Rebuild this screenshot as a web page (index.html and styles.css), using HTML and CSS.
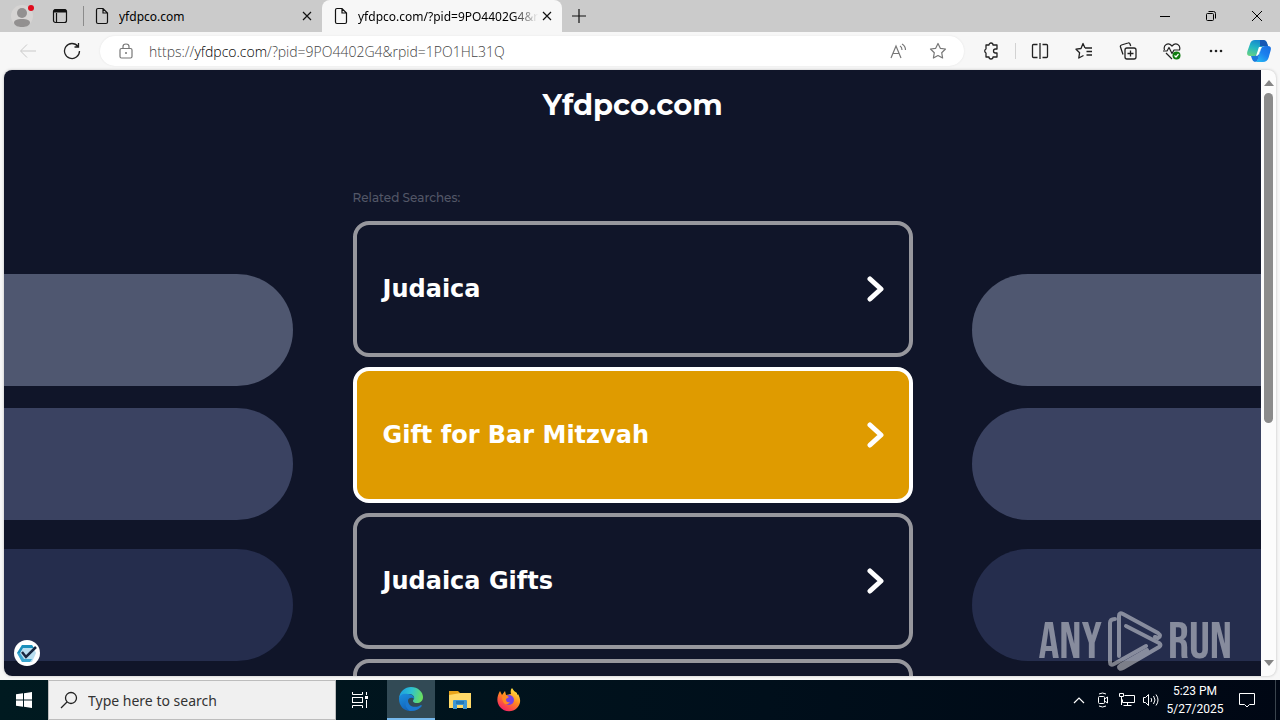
FILE: index.html
```html
<!DOCTYPE html>
<html lang="en">
<head>
    <meta charset="UTF-8">
    <meta name="viewport" content="width=device-width, initial-scale=1.0">
    <title>yfdpco.com</title>
    <link rel="stylesheet" href="styles.css">
</head>
<body>
    <!-- tab strip -->
    <div class="tab-bar">
        <button class="profile">
            <svg width="24" height="24" viewBox="0 0 24 24">
                <circle cx="12" cy="12" r="11" fill="#d6d4d3"/>
                <circle cx="12" cy="9" r="5" fill="#929090"/>
                <path d="M4 19c0-3 3-4 8-4s8 1 8 4c-1 3-4 4-8 4s-7-1-8-4z" fill="#929090"/>
                <circle cx="21" cy="4" r="3" fill="#e00b1c"/>
            </svg>
        </button>
        <button class="tab-actions">
            <svg width="16" height="16" viewBox="0 0 16 16" fill="none" stroke="#111" stroke-width="1.2">
                <rect x="1.5" y="1.5" width="13" height="13" rx="2"/>
                <path d="M2 3h12" stroke-width="3"/><path d="M4.500 5v9"/>
            </svg>
        </button>
        <span class="divider"></span>
        <div class="tab">
            <svg width="14" height="18" viewBox="0 0 14 18" fill="none" stroke="#111" stroke-width="1.2">
                <path d="M3 1.500h5l4.500 4.500v9q0 1.500-1.500 1.500H3q-1.500 0-1.500-1.500V3Q1.500 1.500 3 1.500zM8 1.500V6h4.500"/>
            </svg>
            <span class="tab-title">yfdpco.com</span>
            <button class="tab-close">
                <svg width="10" height="10" viewBox="0 0 10 10" stroke="#111" stroke-width="1.2"><path d="M1 1l8 8M9 1l-8 8"/></svg>
            </button>
        </div>
        <div class="tab active">
            <svg width="14" height="18" viewBox="0 0 14 18" fill="none" stroke="#111" stroke-width="1.2">
                <path d="M3 1.500h5l4.500 4.500v9q0 1.500-1.500 1.500H3q-1.500 0-1.500-1.500V3Q1.500 1.500 3 1.500zM8 1.500V6h4.500"/>
            </svg>
            <span class="tab-title">yfdpco.com/?pid=9PO4402G4&amp;r</span>
            <button class="tab-close">
                <svg width="10" height="10" viewBox="0 0 10 10" stroke="#111" stroke-width="1.2"><path d="M1 1l8 8M9 1l-8 8"/></svg>
            </button>
        </div>
        <button class="new-tab">
            <svg width="14" height="14" viewBox="0 0 14 14" stroke="#111" stroke-width="1.2"><path d="M7 0v14M0 7h14"/></svg>
        </button>
        <div class="window-buttons">
            <button><svg width="12" height="12" viewBox="0 0 12 12" stroke="#000"><path d="M1 6.500h10"/></svg></button>
            <button>
                <svg width="12" height="12" viewBox="0 0 12 12" fill="none" stroke="#000">
                    <rect x="1.500" y="3.500" width="7" height="7" rx="1"/><path d="M3.500 1.500h5q2 0 2 2v5"/>
                </svg>
            </button>
            <button><svg width="12" height="12" viewBox="0 0 12 12" stroke="#000"><path d="M1 1l10 10M11 1L1 11"/></svg></button>
        </div>
    </div>

    <!-- address bar and toolbar icons -->
    <div class="toolbar">
        <button class="tool back">
            <svg width="18" height="16" viewBox="0 0 18 16" fill="none" stroke="#c9c9c9"><path d="M17 8H2M8 1.500L1.500 8 8 14.500"/></svg>
        </button>
        <button class="tool">
            <svg width="18" height="18" viewBox="0 0 18 18" fill="none" stroke="#222" stroke-width="1.300">
                <path d="M15 4.500A7.500 7.500 0 1 0 16.500 9M15.500 1v4h-4"/>
            </svg>
        </button>
        <div class="address">
            <svg width="14" height="16" viewBox="0 0 14 16" fill="none" stroke="#777" stroke-width="1.200">
                <rect x="1" y="5.500" width="12" height="9.500" rx="1.500"/><path d="M4 5V3.500a3 2.500 0 0 1 6 0V5"/>
                <circle cx="7" cy="10" r="1" fill="#777" stroke="none"/>
            </svg>
            <a class="url" href="#">https://<span>yfdpco.com</span>/?pid=9PO4402G4&amp;rpid=1PO1HL31Q</a>
            <button class="read">
                <svg width="18" height="18" viewBox="0 0 18 18" fill="none" stroke="#777" stroke-width="1.200">
                    <path d="M2 16L7 4l5 12M4 11.500h6M11 4q2 1 2 4M13 2q3.500 2 3.500 6"/>
                </svg>
            </button>
            <button class="favorite">
                <svg width="18" height="18" viewBox="0 0 18 18" fill="none" stroke="#777" stroke-width="1.200" stroke-linejoin="round">
                    <path d="M9 1.500l2.300 4.800 5.200.7-3.800 3.700.9 5.300L9 13.500 4.400 16l.9-5.300L1.500 7l5.200-.7z"/>
                </svg>
            </button>
        </div>
        <button class="tool ext">
            <svg width="18" height="18" viewBox="0 0 18 18" fill="none" stroke="#222" stroke-width="1.300" stroke-linejoin="round">
                <path d="M4 3h3a2 2 0 0 1 4 0h4v4h-1.500a2 2 0 0 0 0 4H15v4h-4a2 2 0 0 1-4 0H4v-4a2.200 2.200 0 0 1 0-4z"/>
            </svg>
        </button>
        <span class="divider"></span>
        <button class="tool">
            <svg width="18" height="18" viewBox="0 0 18 18" fill="none" stroke="#222" stroke-width="1.300">
                <path d="M6.500 2.500h-4q-1 0-1 1v11q0 1 1 1h4M11.500 2.500h4q1 0 1 1v11q0 1-1 1h-4M9 1v16"/>
            </svg>
        </button>
        <button class="tool">
            <svg width="18" height="18" viewBox="0 0 18 18" fill="none" stroke="#222" stroke-width="1.300" stroke-linejoin="round">
                <path d="M10 6H17M11.500 9.500H17M11.500 13H17M10 6L8 1.500 6 6.500l-5 .7 3.600 3.500L3.800 16 8.500 13.500"/>
            </svg>
        </button>
        <button class="tool">
            <svg width="18" height="18" viewBox="0 0 18 18" fill="none" stroke="#222" stroke-width="1.300">
                <rect x="6" y="6" width="11" height="11" rx="2"/><path d="M11.500 8.500v6M8.500 11.500h6M4 12.500L1.500 5Q1 3.500 2.500 3L9 1q1.500-.5 2 1l.7 2"/>
            </svg>
        </button>
        <button class="tool">
            <svg width="18" height="18" viewBox="0 0 18 18" fill="none" stroke="#222" stroke-width="1.200" stroke-linejoin="round">
                <path d="M1.500 8C0 3 5-.500 9 4c4-4.500 9-1 7.500 4M3 11l6 6M0 9h4l2-3.500 3 6L11 8h6"/>
                <circle cx="13.500" cy="13.500" r="4" fill="#107c10" stroke="none"/><path d="M11.500 13.500l1.500 1.500 2.500-3" stroke="#fff"/>
            </svg>
        </button>
        <button class="tool">
            <svg width="14" height="4" viewBox="0 0 14 4" fill="#222"><circle cx="2" cy="2" r="1.300"/><circle cx="7" cy="2" r="1.300"/><circle cx="12" cy="2" r="1.300"/></svg>
        </button>
        <button class="tool copilot">
            <svg width="24" height="24" viewBox="0 0 24 24">
                <defs>
                    <linearGradient id="cop1" x1="0.600" y1="0" x2="0.200" y2="1">
                        <stop offset="0" stop-color="#1583cf"/><stop offset="0.500" stop-color="#23b6c3"/><stop offset="1" stop-color="#64d184"/>
                    </linearGradient>
                    <linearGradient id="cop2" x1="1" y1="0" x2="0.200" y2="1">
                        <stop offset="0" stop-color="#176de0"/><stop offset="0.500" stop-color="#1b7fee"/><stop offset="1" stop-color="#25b9f3"/>
                    </linearGradient>
                </defs>
                <path d="M8 1h8q3 0 4 3l1 3h-3q-3 0-4 3l-3 7H3q-4 0-2.500-5L3 5q1-4 5-4z" fill="url(#cop1)"/>
                <path d="M13 1h3q3 0 4 3l1 3h-8z" fill="#1457b4"/>
                <path d="M8 23h8q4 0 5.500-4l2-7q1.500-5-2.500-5h-3q-3 0-4 3l-3 9q-1 4-3 4z" fill="url(#cop2)"/>
                <path d="M4 17h4q2 0 3-3l2-1-2 7q-1 3-3 3-2 0-3-3z" fill="#1a79dc"/>
                <path d="M12 8h3q-1 1-2 4l-1 3q-1 2-3 2l2-6q.500-2 1-3z" fill="#fff"/>
            </svg>
        </button>
    </div>

    <!-- web page -->
    <div class="view">
        <div class="page">
            <div class="pills left">
                <div class="pill light"></div>
                <div class="pill mid"></div>
                <div class="pill dark"></div>
            </div>
            <div class="content">
                <h1>Yfdpco.com</h1>
                <p>Related Searches:</p>
                <a class="card" href="#">
                    <span>Judaica</span>
                    <svg width="18" height="28" viewBox="0 0 18 28" fill="none" stroke="#fff" stroke-width="5" stroke-linecap="round" stroke-linejoin="round"><path d="M3 4l11 10L3 24"/></svg>
                </a>
                <a class="card hover" href="#">
                    <span>Gift for Bar Mitzvah</span>
                    <svg width="18" height="28" viewBox="0 0 18 28" fill="none" stroke="#fff" stroke-width="5" stroke-linecap="round" stroke-linejoin="round"><path d="M3 4l11 10L3 24"/></svg>
                </a>
                <a class="card" href="#">
                    <span>Judaica Gifts</span>
                    <svg width="18" height="28" viewBox="0 0 18 28" fill="none" stroke="#fff" stroke-width="5" stroke-linecap="round" stroke-linejoin="round"><path d="M3 4l11 10L3 24"/></svg>
                </a>
                <div class="card"></div>
            </div>
            <div class="pills right">
                <div class="pill light"></div>
                <div class="pill mid"></div>
                <div class="pill dark"></div>
            </div>
            <button class="consent">
                <svg width="26" height="26" viewBox="0 0 26 26">
                    <circle cx="13" cy="13" r="13" fill="#fff"/>
                    <path d="M8 5h10l4 8-4 9H8l-5-9z" fill="#b9def0"/>
                    <path d="M8 5h10l2 3H9l-3 5-3 0z" fill="#1b8fbb"/>
                    <path d="M3 13h3l4 6h8l-2 3H8z" fill="#3aa6d0"/>
                    <path d="M8 12l4 5 10-10" fill="none" stroke="#18263f" stroke-width="2.500"/>
                </svg>
            </button>
        </div>
        <div class="scrollbar">
            <svg width="10" height="6" viewBox="0 0 10 6" fill="#858585"><path d="M5 0l5 6H0z"/></svg>
            <div class="track"><div class="thumb"></div></div>
            <svg width="10" height="6" viewBox="0 0 10 6" fill="#858585"><path d="M0 0h10L5 6z"/></svg>
        </div>
        <div class="watermark">
            <span>ANY</span>
            <svg width="56" height="62" viewBox="0 0 56 62" fill="none" stroke="#fff" stroke-width="4" stroke-linecap="round" stroke-linejoin="round">
                <path d="M12 46V6q0-4 4-2l35 19q4 3 0 5l-3-1M8 9q-5 0-5 4v39q0 4 4 2l32-18"/>
                <path d="M19 16l33 17q3 2 0 4L16 58q-4 2-4-1l2-2 26-15"/>
            </svg>
            <span>RUN</span>
        </div>
    </div>

    <!-- taskbar -->
    <div class="taskbar">
        <button class="task">
            <svg width="16" height="16" viewBox="0 0 16 16" fill="#fff"><path d="M0 2.300L7 1.300V7.500H0zM8 1.200L16 0v7.500H8zM0 8.500h7v6.200l-7-1zM8 8.500h8V16l-8-1.200z"/></svg>
        </button>
        <label class="search">
            <svg width="18" height="18" viewBox="0 0 18 18" fill="none" stroke="#222" stroke-width="1.300"><circle cx="11" cy="7" r="5.500"/><path d="M7 11l-6 6"/></svg>
            <input type="text" placeholder="Type here to search">
        </label>
        <button class="task">
            <svg width="18" height="16" viewBox="0 0 18 16" fill="none" stroke="#fff">
                <path d="M1.500 0v2.500h10V0M1.500 16v-2.500h10V16M15.500 0v3M15.500 8v8"/><rect x="1.500" y="5.500" width="10" height="5"/><path d="M14 5.500h3" stroke-width="3"/>
            </svg>
        </button>
        <button class="task current">
            <svg width="26" height="26" viewBox="0 0 26 26">
                <defs>
                    <linearGradient id="edge1" x1="0" y1="0.300" x2="1" y2="0.500"><stop offset="0" stop-color="#1b9de2"/><stop offset="0.500" stop-color="#2fc2cf"/><stop offset="1" stop-color="#6be05c"/></linearGradient>
                    <linearGradient id="edge2" x1="0" y1="0" x2="0.500" y2="1"><stop offset="0" stop-color="#1b8fde"/><stop offset="1" stop-color="#1261b8"/></linearGradient>
                </defs>
                <path d="M1 12C2 5 7 1 13 1c7 0 12 5 12 10 0 4-3 6-6 6-4 0-5-2-3-4 1-3-2-5-5-5-5 0-8 1-10 4z" fill="url(#edge1)"/>
                <path d="M1 13c0-4 4-6 9-5 4 0 7 3 6 5-1-2-6-2-6 2 0 5 5 7 9 7l2 0c-3 3-7 3-9 3C6 25 1 20 1 13z" fill="url(#edge2)"/>
                <path d="M10 15c0 5 7 8 13 4 1 0 1 1 0 2-3 3-7 4-11 4-5-3-6-9-2-12z" fill="#1b78cf"/>
            </svg>
        </button>
        <button class="task">
            <svg width="22" height="20" viewBox="0 0 22 20">
                <path d="M0 1h9l2 2h10v3H0z" fill="#e8a41b"/><path d="M0 5l12-2h10v15H0z" fill="#ffd968"/>
                <path d="M4 19v-8q0-1 1-1h12q1 0 1 1v8h-4v-4H8v4z" fill="#3f97d3"/><path d="M7 11h8v3H7z" fill="#2478b7"/>
            </svg>
        </button>
        <button class="task">
            <svg width="24" height="24" viewBox="0 0 24 24">
                <defs><linearGradient id="fox" x1="0.800" y1="0" x2="0.200" y2="1"><stop offset="0" stop-color="#fff044"/><stop offset="0.450" stop-color="#ff8a20"/><stop offset="1" stop-color="#f5156c"/></linearGradient></defs>
                <path d="M3 3l2 4 3-4 1 4 5-1q-1-4 1-6 2 4 5 5l0 2 1-1c3 5 3 10-1 14-5 5-13 4-17-1-4-5-3-11 0-16z" fill="url(#fox)"/>
                <circle cx="12" cy="12" r="5" fill="#7542e5"/><path d="M5 8q4-2 7 1l-3 2q0 4 4 3-2 3-5 2-3-2-3-8z" fill="#ff8a22"/>
            </svg>
        </button>
        <div class="tray">
            <button><svg width="14" height="14" viewBox="0 0 14 14" fill="none" stroke="#fff" stroke-width="1.200"><path d="M2 10l5-5 5 5"/></svg></button>
            <button>
                <svg width="14" height="16" viewBox="0 0 14 16" fill="none" stroke="#fff"><path d="M3 2q3.500-2 7 0M3 14q3.500 2 7 0"/><rect x="2.500" y="4.500" width="6" height="7" rx="1"/><path d="M8.500 7l3-2v6l-3-2"/></svg>
            </button>
            <button>
                <svg width="18" height="16" viewBox="0 0 18 16" fill="none" stroke="#fff"><path d="M6.500 3.500h10v7h-12v-3M9.500 10.500v3M5.500 13.500h8M3.500 5v8"/><path d="M1.500 1.500h4v3h-4z"/></svg>
            </button>
            <button>
                <svg width="18" height="14" viewBox="0 0 18 14" fill="none" stroke="#fff"><path d="M1.500 4.500h2l3-3v11l-3-3h-2zM9 5q1.500 2 0 4M11.500 3q3 4 0 8M14 1.500q4 5.500 0 11"/></svg>
            </button>
            <div class="clock">
                <span>5:23 PM</span>
                <span>5/27/2025</span>
            </div>
            <button class="notify">
                <svg width="18" height="18" viewBox="0 0 18 18" fill="none" stroke="#fff"><path d="M1.500 2.500h15v11h-5L9 16l-2.500-2.500h-5z"/></svg>
            </button>
        </div>
    </div>
</body>
</html>
```
FILE: styles.css
```css
*{
    box-sizing: border-box;
}

body{
    margin: 0;
    height: 100vh;
    display: flex;
    flex-direction: column;
    overflow: hidden;
    background: #f7f7f7;
    font-family: "Noto Sans", "Open Sans", sans-serif;
    font-size: 12px;
}

button{
    display: flex;
    justify-content: center;
    align-items: center;
    flex-shrink: 0;
    padding: 0;
    border: 0;
    background: none;
}

a{
    color: inherit;
    text-decoration: none;
}

svg{
    flex-shrink: 0;
}

/* tabs */
.tab-bar{
    display: flex;
    height: 32px;
    align-items: center;
    background: #cbcbcb;
}

.profile{
    width: 44px;
}

.tab-actions{
    width: 32px;
}

.divider{
    width: 1px;
    height: 20px;
    background: #8b8b8b;
}

.tab-bar .divider{
    margin-left: 7px;
}

.tab{
    display: flex;
    align-items: center;
    width: 238px;
    height: 32px;
    padding: 0 10px 0 11px;
}

.tab.active{
    width: 240px;
    background: #f7f7f7;
    border-radius: 8px 8px 0 0;
    padding-left: 12px;
}

.tab-title{
    flex: 1;
    min-width: 0;
    margin-left: 10px;
    overflow: hidden;
    white-space: nowrap;
}

.active .tab-title{
    -webkit-mask-image: linear-gradient(to right, #000 84%, transparent 98%);
    mask-image: linear-gradient(to right, #000 84%, transparent 98%);
}

.tab-close{
    width: 10px;
    height: 20px;
}

.new-tab{
    width: 34px;
    height: 32px;
}

.window-buttons{
    display: flex;
    margin-left: auto;
}

.window-buttons button{
    width: 46px;
    height: 32px;
}

/* toolbar */
.toolbar{
    display: flex;
    align-items: center;
    height: 38px;
    padding-left: 6px;
}

.tool{
    width: 44px;
    height: 30px;
}

.tool.ext{
    width: 48px;
    margin-left: 3px;
}

.tool.copilot{
    width: 42px;
}

.toolbar .divider{
    background: #d2d2d2;
    height: 16px;
    margin-right: 2px;
}

.address{
    flex: 1;
    min-width: 0;
    display: flex;
    align-items: center;
    height: 30px;
    margin-left: 6px;
    padding: 0 17px 0 19px;
    border-radius: 15px;
    background: #fff;
    box-shadow: 0 0 2px #e2e2e2;
}

.url{
    flex: 1;
    margin-left: 16px;
    font-family: "Open Sans", "Noto Sans", sans-serif;
    font-size: 14px;
    font-weight: 300;
    color: #444;
    white-space: nowrap;
}

.url span{
    color: #000;
}

.read{
    margin-right: 22px;
}

/* page */
.view{
    flex: 1;
    min-height: 0;
    display: flex;
    position: relative;
    margin: 0 4px 4px;
    border-radius: 8px;
    overflow: hidden;
    background: #fcfcfc;
    box-shadow: 0 0 3px #bbb;
}

.page{
    flex: 1;
    position: relative;
    display: grid;
    grid-template-columns: 1fr 560px 1fr;
    overflow: hidden;
    background: #101529;
}

.content{
    color: #fff;
}

h1{
    margin: 17px 0 67px;
    text-align: center;
    font-family: Montserrat, Inter, sans-serif;
    font-size: 29px;
    line-height: 36px;
}

.content p{
    margin: 0 0 15px;
    font-family: Montserrat, Inter, sans-serif;
    font-size: 12px;
    font-weight: 500;
    line-height: 16px;
    color: #535767;
}

.card{
    display: flex;
    justify-content: space-between;
    align-items: center;
    height: 136px;
    margin-bottom: 10px;
    padding: 0 24px 0 26px;
    border: 4px solid #97979d;
    border-radius: 16px;
    font-family: Verdana, "DejaVu Sans", sans-serif;
    font-size: 24px;
    font-weight: bold;
}

.card.hover{
    background: #df9b00;
    border-color: #fff;
}

.pills{
    padding-top: 204px;
}

.pill{
    height: 112px;
}

.left .pill{
    margin-right: 60px;
    border-radius: 0 56px 56px 0;
}

.right .pill{
    margin-left: 59px;
    border-radius: 56px 0 0 56px;
}

.pill.light{
    background: #4f5770;
    margin-bottom: 22px;
}

.pill.mid{
    background: #3a4261;
    margin-bottom: 29px;
}

.pill.dark{
    background: #252d4d;
}

.consent{
    position: absolute;
    left: 10px;
    bottom: 10px;
}

.scrollbar{
    width: 15px;
    display: flex;
    flex-direction: column;
    align-items: center;
    padding: 10px 0;
}

.track{
    flex: 1;
    width: 9px;
    padding: 7px 0;
}

.thumb{
    height: 59%;
    border-radius: 5px;
    background: #8b8b8b;
}

.watermark{
    position: absolute;
    right: 44px;
    bottom: 2px;
    display: flex;
    align-items: center;
    gap: 5px;
    opacity: 0.45;
    color: #fff;
    font-family: "Bebas Neue", "Roboto Condensed", sans-serif;
    font-size: 52px;
    line-height: 62px;
}

.watermark span{
    padding-top: 4px;
}

/* taskbar */
.taskbar{
    display: flex;
    align-items: center;
    height: 40px;
    background: linear-gradient(to right, #001a20, #000f1b 60%, #000714);
}

.task{
    width: 48px;
    height: 40px;
    margin-right: 1px;
}

.task:first-child{
    margin-right: 0;
}

.search{
    display: flex;
    align-items: center;
    width: 288px;
    height: 40px;
    padding-left: 11px;
    gap: 10px;
    background: #f0f0f0;
    border: 1px solid #bdbdbd;
}

.search input{
    flex: 1;
    min-width: 0;
    padding: 0;
    border: 0;
    outline: 0;
    background: none;
    font-family: inherit;
    font-size: 14px;
}

.search input::placeholder{
    color: #333;
}

.search + .task{
    margin-right: 3px;
}

.task.current{
    background: #324a55;
    border-bottom: 2px solid #76b9ed;
}

.tray{
    display: flex;
    align-items: center;
    margin-left: auto;
    padding-right: 4px;
    border-right: 1px solid #3a444d;
    margin-right: 4px;
    color: #fff;
}

.tray button{
    width: 24px;
    height: 40px;
}

.clock{
    display: flex;
    flex-direction: column;
    align-items: center;
    width: 56px;
    margin-left: 4px;
    font-family: Roboto, "Noto Sans", sans-serif;
    line-height: 18px;
}

.tray .notify{
    width: 48px;
}
```
